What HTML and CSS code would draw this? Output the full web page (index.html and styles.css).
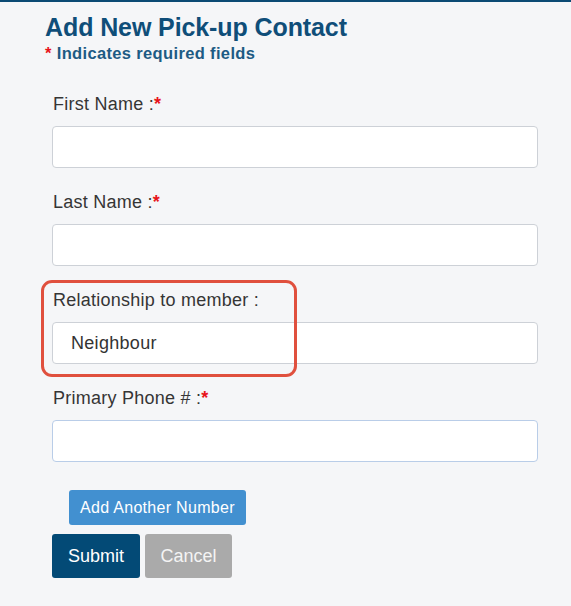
FILE: index.html
```html
<!DOCTYPE html>
<html>
<head>
<meta charset="utf-8">
<link rel="stylesheet" href="styles.css">
</head>
<body>
<div class="page">
  <header class="head">
    <h1 class="title">Add New Pick-up Contact</h1>
    <p class="note"><span class="req">*</span> Indicates required fields</p>
  </header>
  <form class="form">
    <div class="group">
      <label class="label">First Name :<span class="req">*</span></label>
      <div class="input"></div>
    </div>
    <div class="group">
      <label class="label">Last Name :<span class="req">*</span></label>
      <div class="input"></div>
    </div>
    <div class="group highlighted">
      <label class="label">Relationship to member :</label>
      <div class="input">Neighbour</div>
      <div class="callout"></div>
    </div>
    <div class="group">
      <label class="label">Primary Phone # :<span class="req">*</span></label>
      <div class="input focus"></div>
    </div>
    <div class="more-row">
      <button type="button" class="btn btn-add">Add Another Number</button>
    </div>
    <div class="actions">
      <button type="button" class="btn btn-submit">Submit</button>
      <button type="button" class="btn btn-cancel">Cancel</button>
    </div>
  </form>
</div>
</body>
</html>
```

FILE: styles.css
```css
html, body {
  margin: 0;
  padding: 0;
}
body {
  background: #f5f6f8;
  font-family: "Liberation Sans", Arial, sans-serif;
  border-top: 2px solid #0b4a74;
  min-height: 604px;
}
.page {
  display: flex;
  flex-direction: column;
}
.head {
  padding: 11px 0 0 45px;
}
.title {
  margin: 0;
  font-size: 25px;
  line-height: 28px;
  font-weight: bold;
  color: #0f4e79;
  letter-spacing: -0.1px;
}
.note {
  margin: 2px 0 0 0;
  font-size: 16.5px;
  line-height: 20px;
  font-weight: bold;
  color: #1d5b84;
  letter-spacing: 0.35px;
}
.req {
  color: #e8141b;
}
.form {
  display: flex;
  flex-direction: column;
  padding: 31px 0 0 52px;
}
.group {
  position: relative;
  display: flex;
  flex-direction: column;
  margin-bottom: 24px;
}
.label {
  font-size: 18px;
  line-height: 20px;
  color: #353535;
  margin: 0 0 12px 1px;
  letter-spacing: 0.25px;
}
.label .req {
  font-weight: bold;
}
.input {
  box-sizing: border-box;
  width: 486px;
  height: 42px;
  background: #ffffff;
  border: 1px solid #cdd1d7;
  border-radius: 4px;
  padding: 0 18px;
  display: flex;
  align-items: center;
  font-size: 18px;
  color: #333333;
  letter-spacing: 0.3px;
}
.input.focus {
  border-color: #b9cde8;
}
.callout {
  position: absolute;
  left: -11px;
  top: -10px;
  width: 256px;
  height: 97px;
  box-sizing: border-box;
  border: 3px solid #e0503e;
  border-radius: 11px;
}
.more-row {
  display: flex;
  padding: 4px 0 0 17px;
}
.btn {
  border: none;
  font-family: "Liberation Sans", Arial, sans-serif;
  color: #ffffff;
  cursor: pointer;
}
.btn-add {
  height: 35px;
  padding: 0 11px;
  background: #4290d0;
  border-radius: 3px;
  font-size: 16px;
  letter-spacing: 0.3px;
}
.actions {
  display: flex;
  gap: 5px;
  margin-top: 9px;
}
.btn-submit, .btn-cancel {
  height: 44px;
  width: 88px;
  border-radius: 3px;
  font-size: 18px;
  padding: 0;
}
.btn-submit {
  background: #034a76;
}
.btn-cancel {
  width: 87px;
  background: #aaaaaa;
  color: #f4f4f4;
}
```
